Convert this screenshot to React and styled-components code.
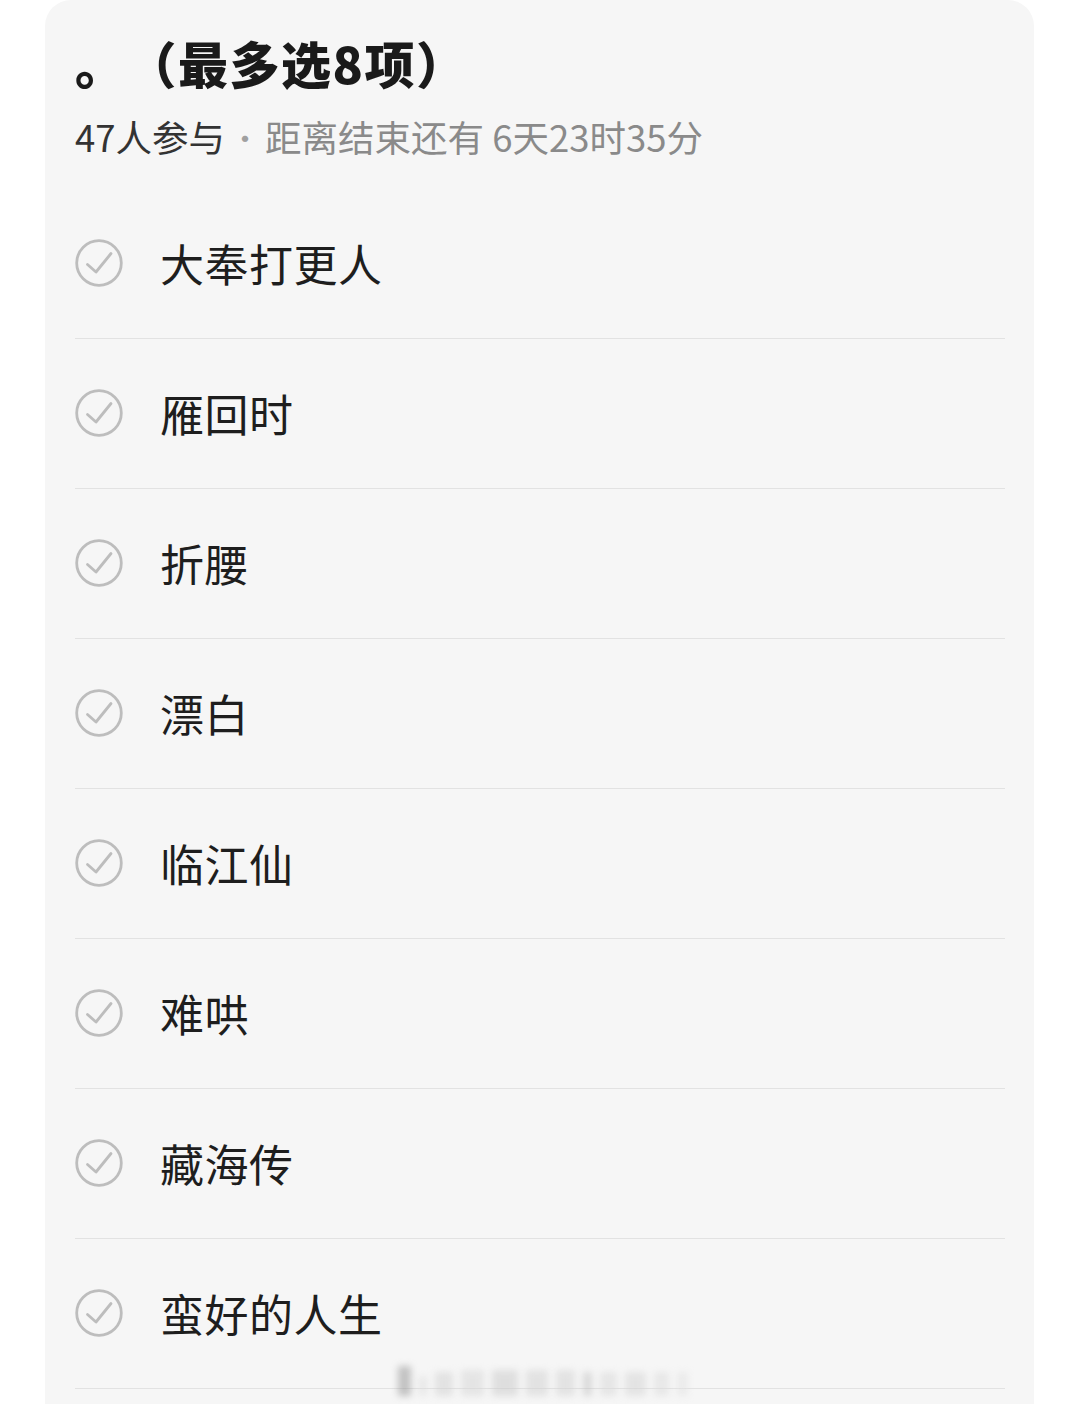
import React from "react";
import styled, { createGlobalStyle } from "styled-components";

const Global = createGlobalStyle`
  html, body { margin: 0; padding: 0; background: #ffffff; }
  body { font-family: "Noto Sans CJK SC", "Noto Sans", sans-serif; }
  * { box-sizing: border-box; }
`;

const Page = styled.div`
  width: 1079px;
  height: 1404px;
  overflow: hidden;
  padding: 0 45px 0 45px;
  position: relative;
`;

const Card = styled.div`
  background: #f6f6f6;
  border-radius: 26px;
  padding: 28px 29px 40px 30px;
  min-height: 1500px;
`;

const Title = styled.h1`
  margin: 0;
  font-size: 50px;
  font-weight: 900;
  line-height: 68px;
  color: #1a1a1a;
  text-spacing-trim: space-all;
  letter-spacing: 1.5px;
`;

const Meta = styled.div`
  margin-top: 17px;
  font-size: 36.5px;
  line-height: 48px;
  color: #8a8a8a;
  display: flex;
  align-items: center;
`;

const Count = styled.span`
  color: #333333;
`;

const Dot = styled.span`
  margin: 0 5px 0 5px;
  color: #a0a0a0;
  font-size: 30px;
`;

const List = styled.div`
  margin-top: 28px;
  display: flex;
  flex-direction: column;
`;

const Row = styled.div`
  height: 150px;
  display: flex;
  align-items: center;
  border-bottom: 1.5px solid #e2e2e2;
  padding-bottom: 1px;
`;

const Check = styled.svg`
  width: 48px;
  height: 48px;
  flex: none;
`;

const Label = styled.span`
  margin-left: 37px;
  font-size: 44px;
  line-height: 1;
  color: #1e1e1e;
  letter-spacing: 0.5px;
`;

const Watermark = styled.div`
  position: absolute;
  left: 398px;
  top: 1362px;
  width: 290px;
  height: 34px;
  display: flex;
  align-items: flex-end;
  gap: 8px;
  filter: blur(3.5px);
  opacity: 0.5;
`;

const Bar = styled.span`
  display: block;
  width: ${(p) => p.w}px;
  height: ${(p) => p.h}px;
  background: ${(p) => p.c};
`;

const items = ["大奉打更人", "雁回时", "折腰", "漂白", "临江仙", "难哄", "藏海传", "蛮好的人生"];

const bars = [
  [14, 30, "#8f8f8f"], [8, 20, "#d8d8d8"], [20, 24, "#cfcfcf"], [24, 26, "#d4d4d4"],
  [28, 26, "#c8c8c8"], [24, 26, "#cfcfcf"], [20, 26, "#d0d0d0"], [10, 24, "#bdbdbd"],
  [18, 24, "#d6d6d6"], [22, 24, "#d2d2d2"], [16, 24, "#dadada"], [12, 24, "#e0e0e0"],
];

function CheckIcon() {
  return (
    <Check viewBox="0 0 48 48">
      <circle cx="24" cy="24" r="22.3" fill="none" stroke="#bdbdbd" strokeWidth="2.8" />
      <path d="M12.5 25.5 L21 33 L36 14.5" fill="none" stroke="#bdbdbd" strokeWidth="2.8" strokeLinecap="round" strokeLinejoin="round" />
    </Check>
  );
}

export default function App() {
  return (
    <>
      <Global />
      <Page>
        <Card>
          <Title>。（最多选8项）</Title>
          <Meta>
            <Count>47人参与</Count>
            <Dot>·</Dot>
            <span>距离结束还有 6天23时35分</span>
          </Meta>
          <List>
            {items.map((t) => (
              <Row key={t}>
                <CheckIcon />
                <Label>{t}</Label>
              </Row>
            ))}
          </List>
        </Card>
        <Watermark>
          {bars.map((b, i) => (
            <Bar key={i} w={b[0]} h={b[1]} c={b[2]} />
          ))}
        </Watermark>
      </Page>
    </>
  );
}
